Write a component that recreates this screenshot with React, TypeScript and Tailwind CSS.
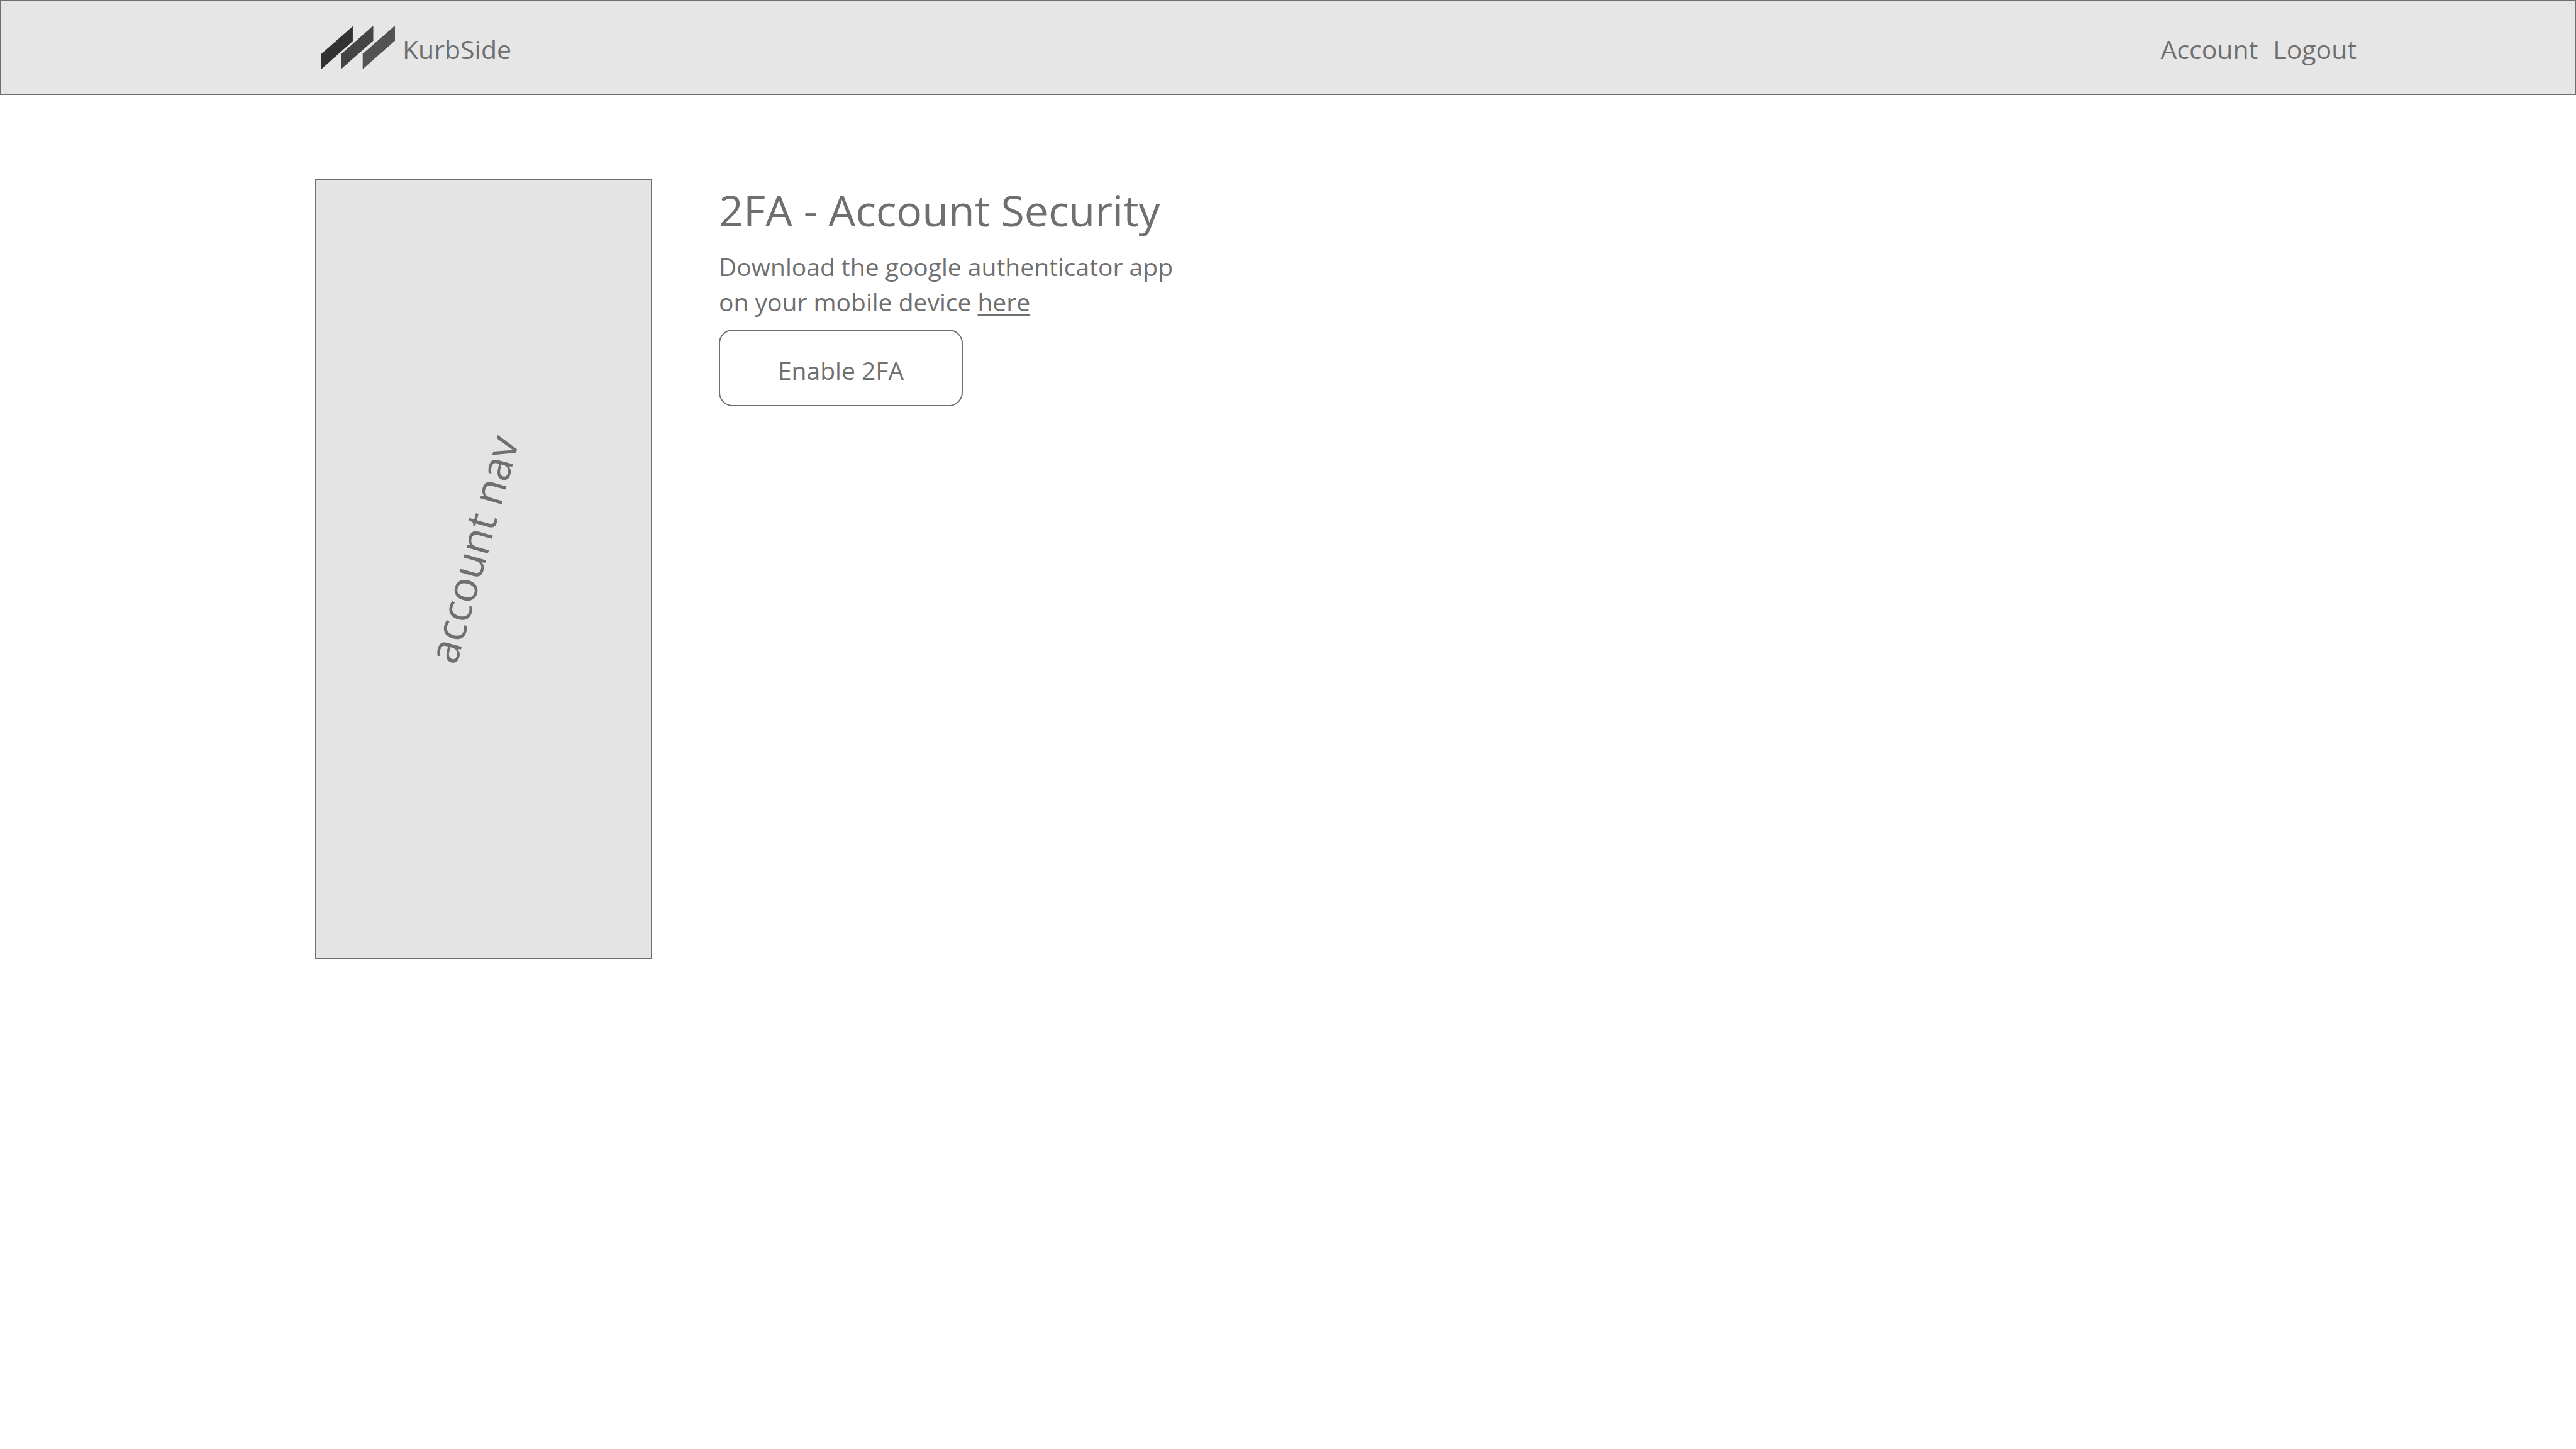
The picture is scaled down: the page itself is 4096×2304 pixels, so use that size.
function Logo() {
  return (
    <svg viewBox="0 0 154 92" className="h-[71px] w-[118px]" aria-hidden="true">
      <path d="M0 60.5 66.5 2V33L0 92Z" fill="#323232" />
      <path d="M42 60 109 .5V32L42 91Z" fill="#444444" />
      <path d="M87 59 154 .5V32L87 91Z" fill="#535353" />
    </svg>
  );
}

function Header() {
  return (
    <header className="flex h-[151px] items-center justify-between border-2 border-[#6f6f6f] bg-[#e6e6e6] pr-[347px] pl-[508px] text-[41px] leading-[56px]">
      <a href="#" className="flex items-center gap-3">
        <Logo />
        <span className="pt-1">KurbSide</span>
      </a>
      <nav className="flex gap-6 pt-1">
        <a href="#account">Account</a>
        <a href="#logout">Logout</a>
      </nav>
    </header>
  );
}

function Sidebar() {
  return (
    <aside className="flex h-[1241px] w-[536px] shrink-0 items-center justify-center border-2 border-[#6f6f6f] bg-[#e4e4e4] pr-9 pb-16">
      <span className="rotate-[-74.4deg] text-[66px] leading-[96px] whitespace-nowrap">
        account nav
      </span>
    </aside>
  );
}

function TwoFactorSection() {
  return (
    <section className="flex flex-col items-start">
      <h1 className="text-[68px] leading-[100px]">2FA - Account Security</h1>
      <p className="mt-3 text-[39px] leading-[56px]">
        Download the google authenticator app
        <br />
        on your mobile device{" "}
        <a href="#authenticator" className="underline decoration-2 underline-offset-[5px]">
          here
        </a>
      </p>
      <button
        type="button"
        className="mt-4 h-[122px] w-[388px] rounded-[22px] border-2 border-[#6f6f6f] bg-white pt-2 text-[39px] leading-[56px]"
      >
        Enable 2FA
      </button>
    </section>
  );
}

export default function App() {
  return (
    <div className="min-h-screen bg-white font-['Open_Sans',sans-serif] text-[#6f6f6f]">
      <Header />
      <main className="flex gap-[106px] pt-[133px] pl-[501px]">
        <Sidebar />
        <TwoFactorSection />
      </main>
    </div>
  );
}
